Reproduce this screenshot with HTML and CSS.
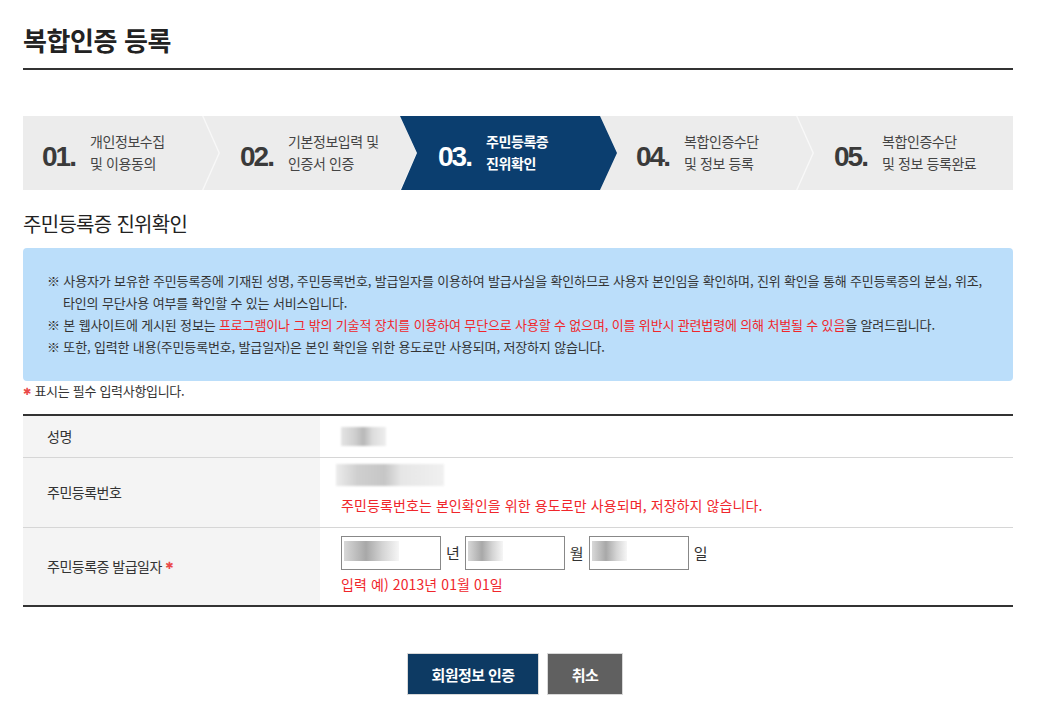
FILE: index.html
```html
<!DOCTYPE html>
<html lang="ko">
<head>
    <meta charset="UTF-8">
    <meta name="viewport" content="width=device-width, initial-scale=1.0">
    <title>복합인증 등록</title>
    <link rel="stylesheet" href="styles.css">
</head>
<body>
    <div class="wrap">
        <h1 class="page-title">복합인증 등록</h1>

        <ol class="steps">
            <li class="step"><span class="num">01.</span><span class="label">개인정보수집<br>및 이용동의</span></li>
            <li class="step"><span class="num">02.</span><span class="label">기본정보입력 및<br>인증서 인증</span></li>
            <li class="step active"><span class="num">03.</span><span class="label">주민등록증<br>진위확인</span></li>
            <li class="step"><span class="num">04.</span><span class="label">복합인증수단<br>및 정보 등록</span></li>
            <li class="step last"><span class="num">05.</span><span class="label">복합인증수단<br>및 정보 등록완료</span></li>
        </ol>

        <h2 class="sub-title">주민등록증 진위확인</h2>

        <div class="notice">
            <p>※ 사용자가 보유한 주민등록증에 기재된 성명, 주민등록번호, 발급일자를 이용하여 발급사실을 확인하므로 사용자 본인임을 확인하며, 진위 확인을 통해 주민등록증의 분실, 위조, 타인의 무단사용 여부를 확인할 수 있는 서비스입니다.</p>
            <p>※ 본 웹사이트에 게시된 정보는 <span class="red">프로그램이나 그 밖의 기술적 장치를 이용하여 무단으로 사용할 수 없으며, 이를 위반시 관련법령에 의해 처벌될 수 있음</span>을 알려드립니다.</p>
            <p>※ 또한, 입력한 내용(주민등록번호, 발급일자)은 본인 확인을 위한 용도로만 사용되며, 저장하지 않습니다.</p>
        </div>

        <p class="required-note"><span class="star">✱</span> 표시는 필수 입력사항입니다.</p>

        <table class="form-table">
            <tr class="row-name">
                <th>성명</th>
                <td><span class="mosaic mosaic-name"></span></td>
            </tr>
            <tr class="row-rrn">
                <th>주민등록번호</th>
                <td>
                    <span class="mosaic mosaic-rrn"></span>
                    <p class="hint">주민등록번호는 본인확인을 위한 용도로만 사용되며, 저장하지 않습니다.</p>
                </td>
            </tr>
            <tr class="row-date">
                <th>주민등록증 발급일자 <span class="star">✱</span></th>
                <td>
                    <div class="date-fields">
                        <input type="text" class="date-input year"><span>년</span>
                        <input type="text" class="date-input month"><span>월</span>
                        <input type="text" class="date-input day"><span>일</span>
                    </div>
                    <p class="hint">입력 예) 2013년 01월 01일</p>
                </td>
            </tr>
        </table>

        <div class="buttons">
            <button class="btn btn-primary">회원정보 인증</button>
            <button class="btn btn-gray">취소</button>
        </div>
    </div>
</body>
</html>
```

FILE: styles.css
```css
body {
    margin: 0;
    font-family: "Noto Sans CJK KR", "Noto Sans", sans-serif;
    color: #333;
    background: #fff;
}
.wrap {
    width: 990px;
    margin-left: 23px;
}
.page-title {
    margin: 0;
    padding-top: 24px;
    height: 44px;
    font-size: 26px;
    font-weight: bold;
    letter-spacing: -0.4px;
    line-height: 32px;
    color: #222;
    border-bottom: 2px solid #333;
}
.steps {
    list-style: none;
    margin: 46px 0 0;
    padding: 0;
    display: flex;
    height: 74px;
    background: #ececec;
}
.step {
    position: relative;
    width: 198px;
    display: flex;
    align-items: center;
    padding-left: 19px;
    box-sizing: border-box;
    color: #444;
}
.step::after {
    content: "";
    position: absolute;
    top: 0;
    right: 0;
    width: 19px;
    height: 100%;
    background: #f8f8f8;
    clip-path: polygon(0 0, 1.5px 0, 18px 50%, 1.5px 100%, 0 100%, 16.5px 50%);
}
.step.last::after {
    display: none;
}
.step.active {
    margin-left: -19px;
    width: 217px;
    padding-left: 38px;
    background: #0b3e6f;
    color: #fff;
    clip-path: polygon(0 0, 200px 0, 100% 50%, 200px 100%, 1px 100%, 17px 50%);
    z-index: 1;
}
.step.active::after {
    display: none;
}
.step + .step.active + .step {
    margin-left: -19px;
    padding-left: 38px;
    width: 217px;
}
.num {
    font-family: "Liberation Sans", Arial, sans-serif;
    font-weight: bold;
    font-size: 28px;
    letter-spacing: -2px;
    color: #3a3a3a;
    margin-right: 15px;
    padding-top: 8px;
}
.active .num {
    color: #fff;
}
.label {
    font-size: 14px;
    line-height: 22px;
    letter-spacing: -0.4px;
    margin-top: -3px;
}
.active .label {
    font-weight: bold;
}
.sub-title {
    margin: 20px 0 0;
    font-size: 20px;
    font-weight: normal;
    color: #222;
    line-height: 28px;
    letter-spacing: -0.7px;
}
.notice {
    margin-top: 10px;
    background: #bbdefa;
    border-radius: 4px;
    padding: 22px 24px 23px;
    font-size: 13px;
    line-height: 22px;
    letter-spacing: -0.15px;
    color: #333;
}
.notice p {
    margin: 0;
    padding-left: 16px;
    text-indent: -16px;
}
.red {
    color: #f0262b;
}
.required-note {
    margin: 0;
    font-size: 13px;
    line-height: 20px;
    letter-spacing: -0.3px;
    color: #333;
}
.star {
    color: #ea4a4a;
    font-family: "DejaVu Sans", sans-serif;
    font-size: 10px;
    vertical-align: 1px;
}
.form-table {
    width: 100%;
    margin-top: 12px;
    border-collapse: collapse;
    border-top: 2px solid #333;
    border-bottom: 2px solid #333;
    font-size: 14px;
}
.form-table tr + tr {
    border-top: 1px solid #d6d6d6;
}
.form-table th {
    width: 297px;
    background: #f4f4f4;
    text-align: left;
    font-weight: normal;
    padding: 0 0 0 24px;
    box-sizing: border-box;
    color: #333;
    letter-spacing: -0.5px;
}
.form-table th .star {
    vertical-align: 3px;
}
.form-table td {
    padding: 0 0 0 21px;
    vertical-align: top;
}
.row-name {
    height: 42px;
}
.row-name td {
    vertical-align: middle;
}
.row-rrn {
    height: 70px;
}
.row-date {
    height: 79px;
}
.mosaic {
    display: block;
    background: linear-gradient(90deg, #e4e4e4 0, #d0d0d0 30%, #b8b8b8 50%, #dcdcdc 70%, #eeeeee 100%);
    filter: blur(1px);
}
.mosaic-name {
    width: 45px;
    height: 19px;
}
.mosaic-rrn {
    width: 108px;
    height: 22px;
    margin: 6px 0 0 -5px;
    background: linear-gradient(90deg, #ececec 0, #cfcfcf 20%, #c6c6c6 45%, #e6e6e6 60%, #f0f0f0 100%);
}
.hint {
    margin: 8px 0 0;
    color: #f0262b;
    font-size: 14px;
    line-height: 22px;
    letter-spacing: 0.1px;
}
.row-date .hint {
    margin-top: 3px;
}
.date-fields {
    display: flex;
    align-items: center;
    margin-top: 8px;
    font-size: 15px;
    color: #333;
}
.date-fields span {
    margin: 0 5px;
}
.date-input {
    width: 100px;
    height: 34px;
    box-sizing: border-box;
    border: 1px solid #888;
    margin: 0;
    background: #fff linear-gradient(90deg, #d8d8d8, #a8a8a8 40%, #d4d4d4 70%, #f6f6f6) no-repeat 2px 4px / 55px 20px;
}
.date-input.month,
.date-input.day {
    background-size: 35px 20px;
}
.buttons {
    display: flex;
    justify-content: center;
    gap: 8px;
    margin-top: 46px;
    padding-right: 6px;
}
.btn {
    height: 42px;
    border: 1px solid #d8d8d8;
    color: #fff;
    font-family: "Noto Sans CJK KR", sans-serif;
    font-size: 15px;
    font-weight: bold;
    letter-spacing: -0.6px;
    cursor: pointer;
}
.btn-primary {
    width: 132px;
    background: #0d3a63;
}
.btn-gray {
    width: 76px;
    background: #606060;
}
```
